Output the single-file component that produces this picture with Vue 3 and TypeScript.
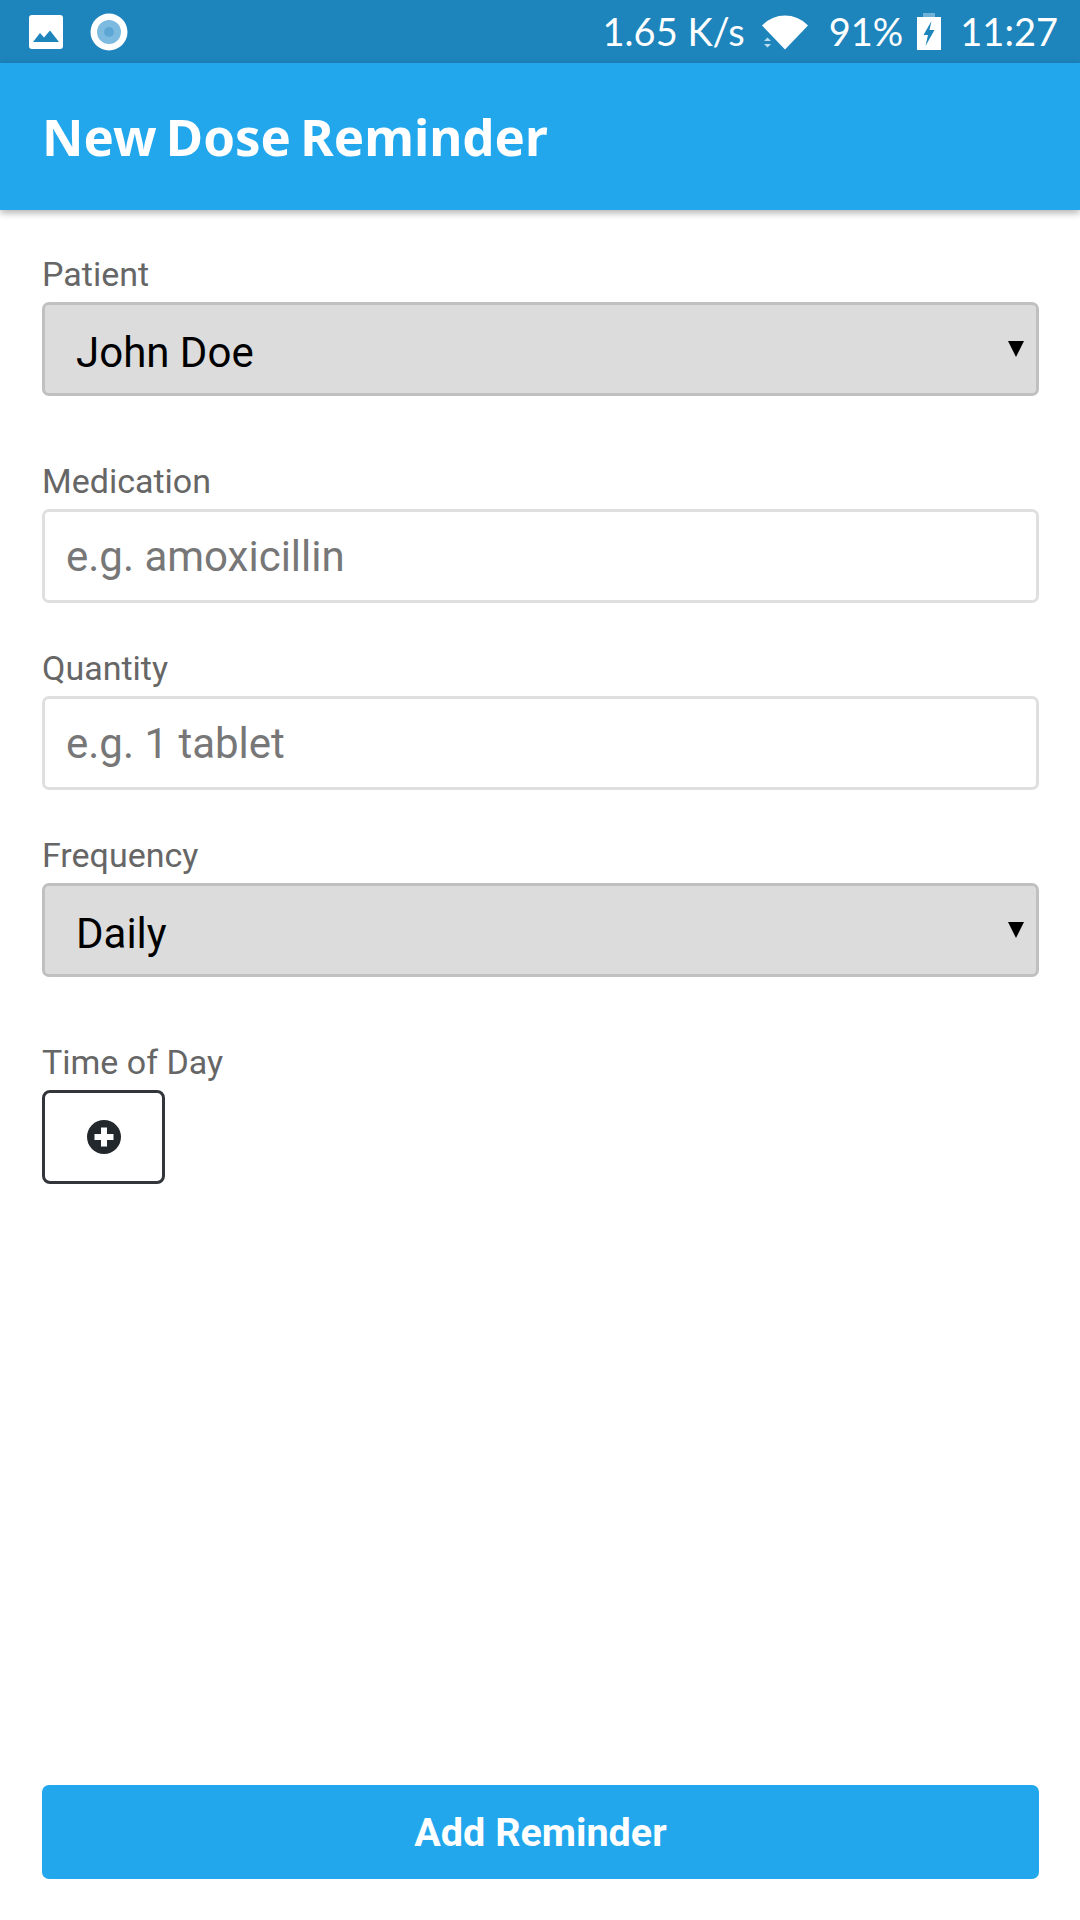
<script setup lang="ts">
import { ref } from 'vue'

const patient = ref('John Doe')
const frequency = ref('Daily')
const medication = ref('')
const quantity = ref('')
</script>

<template>
  <div class="screen">
    <div class="status">
      <div class="status-left">
        <svg class="ic-image" viewBox="0 0 34 34" width="34" height="34">
          <rect width="34" height="34" rx="3" fill="#fff" />
          <path d="M4 27 L11 18 L15 22.5 L21 15.5 L30 27 Z" fill="#1d84bc" />
        </svg>
        <svg class="ic-rec" viewBox="0 0 38 38" width="38" height="38">
          <circle cx="19" cy="19" r="18.5" fill="#fff" />
          <circle cx="19" cy="19" r="12" fill="#7cbbdf" />
          <circle cx="19" cy="19" r="5" fill="#5ea7d5" />
        </svg>
      </div>
      <div class="status-right">
        <span class="speed">1.65 K/s</span>
        <svg class="ic-wifi" viewBox="0 0 46 36" width="46" height="36">
          <path d="M0 11.5 C13 -1.8 33 -1.8 46 11.5 L23 35.5 Z" fill="#fff" />
          <path d="M2 27 L5.5 23.5 L9 27 Z M2 30 L9 30 L5.5 33.5 Z" fill="#b9dcef" />
        </svg>
        <span class="pct">91%</span>
        <svg class="ic-batt" viewBox="0 0 24 38" width="24" height="38">
          <path d="M6 0 H18 V4 H6 Z" fill="#6fb1d6" />
          <path d="M0 4 H24 V37 H0 Z" fill="#fff" />
          <path d="M14.5 8 L6.5 22 H11 L8.5 33 L17.5 17 H12.5 Z" fill="#1d84bc" />
        </svg>
        <span class="clock">11:27</span>
      </div>
    </div>

    <header class="appbar">
      <h1 class="title">New Dose Reminder</h1>
    </header>

    <form class="form" @submit.prevent>
      <label class="field field-select">
        <span class="label">Patient</span>
        <span class="select-wrap">
          <select v-model="patient" class="select">
            <option>John Doe</option>
          </select>
          <span class="arrow"></span>
        </span>
      </label>

      <label class="field">
        <span class="label">Medication</span>
        <input v-model="medication" class="input" placeholder="e.g. amoxicillin" />
      </label>

      <label class="field">
        <span class="label">Quantity</span>
        <input v-model="quantity" class="input" placeholder="e.g. 1 tablet" />
      </label>

      <label class="field field-select">
        <span class="label">Frequency</span>
        <span class="select-wrap">
          <select v-model="frequency" class="select">
            <option>Daily</option>
          </select>
          <span class="arrow"></span>
        </span>
      </label>

      <div class="field">
        <span class="label">Time of Day</span>
        <button type="button" class="add-time" aria-label="Add time">
          <svg viewBox="0 0 34 34" width="34" height="34">
            <circle cx="17" cy="17" r="17" fill="#23282d" />
            <path d="M14 7.5 H20 V14 H26.5 V20 H20 V26.5 H14 V20 H7.5 V14 H14 Z" fill="#fff" />
          </svg>
        </button>
      </div>

      <button type="submit" class="submit">Add Reminder</button>
    </form>
  </div>
</template>

<style>
html, body { margin: 0; background: #fff; }
</style>

<style scoped>
.screen {
  width: 1080px;
  height: 1920px;
  display: flex;
  flex-direction: column;
  background: #fff;
  overflow: hidden;
  font-family: Roboto, "Liberation Sans", sans-serif;
}
.status {
  height: 63px;
  flex: none;
  background: #1d84bc;
  color: #fff;
  display: flex;
  align-items: center;
  justify-content: space-between;
  padding: 0 22px 0 29px;
  font-family: Lato, "Open Sans", sans-serif;
  font-size: 38px;
  line-height: 63px;
}
.status-left { display: flex; align-items: center; gap: 27px; }
.status-right { display: flex; align-items: center; }
.ic-wifi { margin-left: 17px; }
.pct { margin-left: 21px; }
.ic-batt { margin-left: 14px; }
.clock { margin-left: 19px; }
.appbar {
  height: 147px;
  flex: none;
  background: #22a7ed;
  display: flex;
  align-items: center;
  padding: 0 42px 2px;
  box-sizing: border-box;
  box-shadow: 0 3px 7px rgba(0, 0, 0, 0.3);
  position: relative;
}
.title {
  margin: 0;
  color: #fff;
  font-family: "Noto Sans", "Open Sans", sans-serif;
  font-size: 51px;
  font-weight: 700;
  word-spacing: -4px;
}
.form {
  flex: 1;
  display: flex;
  flex-direction: column;
  padding: 54px 41px 41px 42px;
}
.field { display: flex; flex-direction: column; margin-bottom: 55px; }
.field-select { margin-bottom: 75px; }
.label {
  height: 38px;
  line-height: 21px;
  font-size: 34px;
  color: #666;
}
.input, .select {
  box-sizing: border-box;
  width: 100%;
  height: 94px;
  margin: 0;
  border-radius: 7px;
  font-family: Roboto, sans-serif;
  font-size: 42px;
  outline: none;
}
.input {
  border: 3px solid #dfdfdf;
  padding: 0 21px;
  background: #fff;
  color: #000;
}
.input::placeholder { color: #777; opacity: 1; }
.select-wrap { position: relative; display: block; }
.select {
  appearance: none;
  -webkit-appearance: none;
  border: 3px solid #c0c0c0;
  background: #dcdcdc;
  color: #000;
  padding: 7px 0 0 31px;
}
.arrow {
  position: absolute;
  right: 15px;
  top: 39px;
  width: 0;
  height: 0;
  border-left: 8px solid transparent;
  border-right: 8px solid transparent;
  border-top: 16px solid #000;
}
.add-time {
  box-sizing: border-box;
  width: 123px;
  height: 94px;
  padding: 0;
  border: 3px solid #32363a;
  border-radius: 8px;
  background: #fff;
  display: flex;
  align-items: center;
  justify-content: center;
}
.add-time svg { display: block; }
.submit {
  margin-top: auto;
  height: 94px;
  flex: none;
  border: none;
  border-radius: 7px;
  background: #22a7ed;
  color: #fff;
  font-family: Roboto, sans-serif;
  font-size: 39.5px;
  font-weight: 700;
}
</style>
